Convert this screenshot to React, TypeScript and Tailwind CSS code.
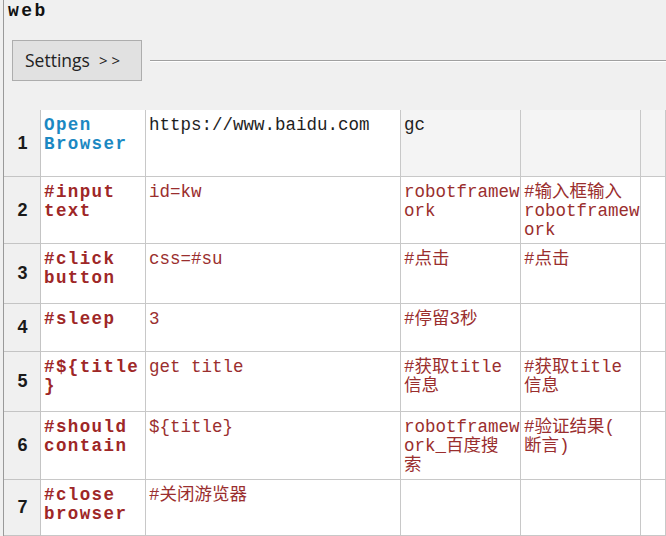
import React from "react";

type Cell = { lines: string[]; kind?: "kw" | "kwblue" | "red" | "black"; gray?: boolean };

const rows: { h: number; cells: Cell[] }[] = [
  {
    h: 67,
    cells: [
      { lines: ["Open", "Browser"], kind: "kwblue" },
      { lines: ["https://www.baidu.com"], kind: "black" },
      { lines: ["gc"], kind: "black", gray: true },
      { lines: [], gray: true },
      { lines: [], gray: true },
    ],
  },
  {
    h: 67,
    cells: [
      { lines: ["#input", "text"], kind: "kw" },
      { lines: ["id=kw"], kind: "red" },
      { lines: ["robotframew", "ork"], kind: "red" },
      { lines: ["#输入框输入", "robotframew", "ork"], kind: "red" },
      { lines: [] },
    ],
  },
  {
    h: 60,
    cells: [
      { lines: ["#click", "button"], kind: "kw" },
      { lines: ["css=#su"], kind: "red" },
      { lines: ["#点击"], kind: "red" },
      { lines: ["#点击"], kind: "red" },
      { lines: [] },
    ],
  },
  {
    h: 48,
    cells: [
      { lines: ["#sleep"], kind: "kw" },
      { lines: ["3"], kind: "red" },
      { lines: ["#停留3秒"], kind: "red" },
      { lines: [] },
      { lines: [] },
    ],
  },
  {
    h: 60,
    cells: [
      { lines: ["#${title", "}"], kind: "kw" },
      { lines: ["get title"], kind: "red" },
      { lines: ["#获取title", "信息"], kind: "red" },
      { lines: ["#获取title", "信息"], kind: "red" },
      { lines: [] },
    ],
  },
  {
    h: 68,
    cells: [
      { lines: ["#should", "contain"], kind: "kw" },
      { lines: ["${title}"], kind: "red" },
      { lines: ["robotframew", "ork_百度搜", "索"], kind: "red" },
      { lines: ["#验证结果(", "断言)"], kind: "red" },
      { lines: [] },
    ],
  },
  {
    h: 60,
    cells: [
      { lines: ["#close", "browser"], kind: "kw" },
      { lines: ["#关闭游览器"], kind: "red" },
      { lines: [] },
      { lines: [] },
      { lines: [] },
    ],
  },
];

const widths = ["w-[105px]", "w-[255px]", "w-[120px]", "w-[120px]", "flex-1"];

function textClass(kind?: Cell["kind"]) {
  switch (kind) {
    case "kwblue":
      return "font-bold text-[#1b88c2] tracking-[1.4px]";
    case "kw":
      return "font-bold text-[#9e2727] tracking-[1.4px]";
    case "red":
      return "text-[#9a2e2e]";
    case "black":
      return "text-[#1e1e1e]";
    default:
      return "";
  }
}

export default function App() {
  return (
    <div className="w-[666px] h-[536px] overflow-hidden bg-[#f0f0f0] pl-[3px]">
      <div className="h-full border-l border-[#9a9a9a] flex flex-col">
        <div className="h-[110px] shrink-0">
          <div
            className="pl-[4px] pt-[1px] text-[18px] leading-[20px] font-bold tracking-[2.5px] text-[#111]"
            style={{ fontFamily: "'Liberation Mono', monospace" }}
          >
            web
          </div>
          <div className="flex items-center mt-[19px] pl-[8px]">
            <div
              className="w-[130px] h-[41px] border border-[#adadad] bg-[#e1e1e1] flex items-center pl-[12px] pb-[1px] text-[17.5px] text-[#222]"
              style={{ fontFamily: "'Open Sans', 'Noto Sans', sans-serif" }}
            >
              Settings
              <span className="ml-[9px] text-[15px] tracking-[4px]">&gt;&gt;</span>
            </div>
            <div className="flex-1 ml-[8px] mt-[1px] h-[2px] border-t border-[#a0a0a0] border-b border-b-white" />
          </div>
        </div>
        <div
          className="flex-1 flex flex-col text-[17.5px] leading-[19px]"
          style={{ fontFamily: "'Liberation Mono', 'Noto Sans CJK SC', monospace" }}
        >
          {rows.map((r, i) => (
            <div
              key={i}
              className={`flex shrink-0 ${i === rows.length - 1 ? "flex-1" : ""}`}
              style={i === rows.length - 1 ? undefined : { height: r.h }}
            >
              <div className="w-[37px] shrink-0 bg-[#f0f0f0] border-r border-b border-[#c4c4c4] flex items-center justify-center pl-[1px]">
                <span
                  className="text-[18px] font-bold text-[#1a1a1a]"
                  style={{ fontFamily: "'Liberation Sans', Arial, sans-serif" }}
                >
                  {i + 1}
                </span>
              </div>
              {r.cells.map((c, j) => (
                <div
                  key={j}
                  className={`${widths[j]} shrink-0 border-r border-b border-[#c8c8c8] pl-[3px] pt-[6px] whitespace-pre ${
                    c.gray ? "bg-[#f4f4f4]" : "bg-white"
                  } ${textClass(c.kind)}`}
                >
                  {c.lines.map((l, k) => (
                    <div key={k}>{l}</div>
                  ))}
                </div>
              ))}
            </div>
          ))}
        </div>
      </div>
    </div>
  );
}
